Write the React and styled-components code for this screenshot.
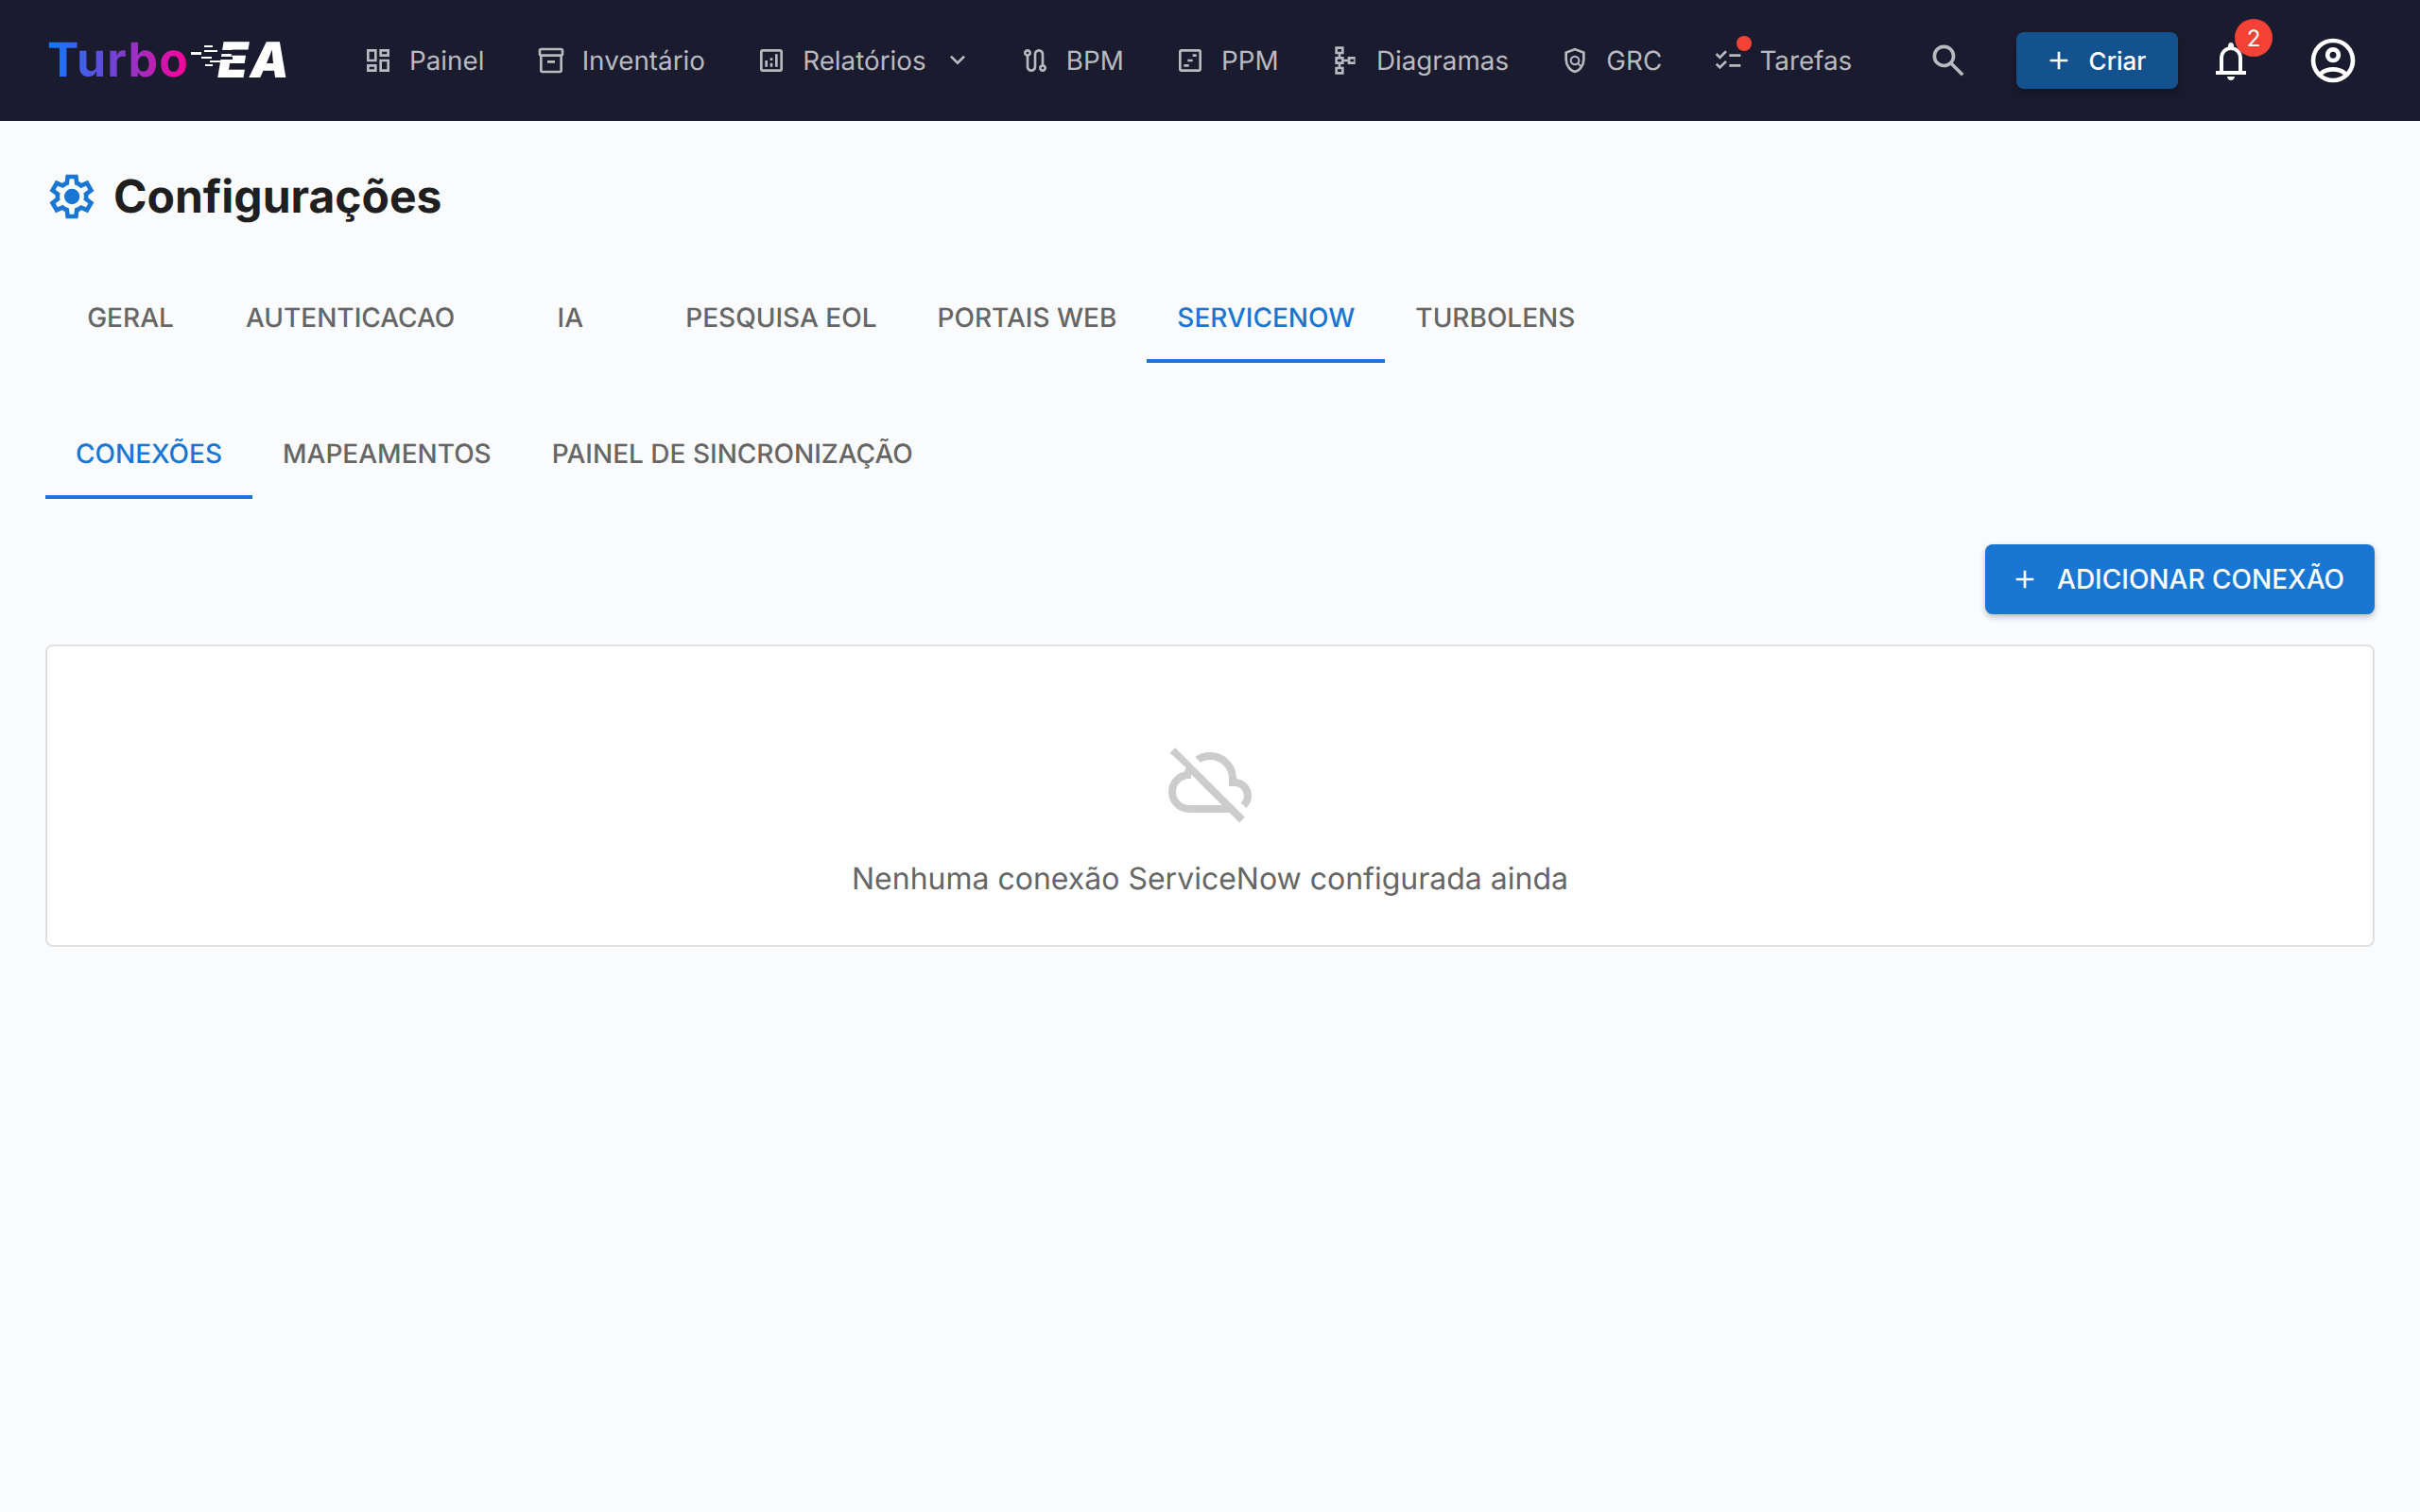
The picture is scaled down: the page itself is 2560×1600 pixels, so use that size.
import React from "react";
import styled, { createGlobalStyle } from "styled-components";

const GlobalStyle = createGlobalStyle`
  html, body {
    margin: 0;
    padding: 0;
    background: #fafbfd;
    font-family: Inter, "Liberation Sans", sans-serif;
    text-rendering: geometricPrecision;
    -webkit-font-smoothing: antialiased;
  }
  * { box-sizing: border-box; }
`;

// material symbols outlined, 960 grid
const paths = {
  dashboard:
    "M520-600v-240h320v240H520ZM120-440v-400h320v400H120Zm400 320v-400h320v400H520Zm-400 0v-240h320v240H120Zm80-400h160v-240H200v240Zm400 320h160v-240H600v240Zm0-480h160v-80H600v80ZM200-200h160v-80H200v80Z",
  inventory:
    "M200-80q-33 0-56.5-23.5T120-160v-451q-18-11-29-28.5T80-680v-120q0-33 23.5-56.5T160-880h640q33 0 56.5 23.5T880-800v120q0 23-11 40.5T840-611v451q0 33-23.5 56.5T760-80H200Zm0-520v440h560v-440H200Zm-40-80h640v-120H160v120Zm200 280h240v-80H360v80Z",
  assessment:
    "M280-280h80v-200h-80v200Zm320 0h80v-400h-80v400Zm-160 0h80v-120h-80v120Zm0-200h80v-80h-80v80ZM200-120q-33 0-56.5-23.5T120-200v-560q0-33 23.5-56.5T200-840h560q33 0 56.5 23.5T840-760v560q0 33-23.5 56.5T760-120H200Zm0-80h560v-560H200v560Z",
  route:
    "M360-120q-66 0-113-47t-47-113v-327q-35-13-57.5-43.5T120-720q0-50 35-85t85-35q50 0 85 35t35 85q0 39-22.5 69.5T280-607v327q0 33 23.5 56.5T360-200q33 0 56.5-23.5T440-280v-400q0-66 47-113t113-47q66 0 113 47t47 113v327q35 13 57.5 43.5T840-240q0 50-35 85t-85 35q-50 0-85-35t-35-85q0-39 22.5-70t57.5-43v-327q0-33-23.5-56.5T600-760q-33 0-56.5 23.5T520-680v400q0 66-47 113t-113 47ZM240-680q17 0 28.5-11.5T280-720q0-17-11.5-28.5T240-760q-17 0-28.5 11.5T200-720q0 17 11.5 28.5T240-680Zm480 480q17 0 28.5-11.5T760-240q0-17-11.5-28.5T720-280q-17 0-28.5 11.5T680-240q0 17 11.5 28.5T720-200Z",
  timeline:
    "M200-120q-33 0-56.5-23.5T120-200v-560q0-33 23.5-56.5T200-840h560q33 0 56.5 23.5T840-760v560q0 33-23.5 56.5T760-120H200Zm0-80h560v-560H200v560Zm360-400h120v-80H560v80ZM400-440h160v-80H400v80ZM280-280h160v-80H280v80Z",
  schema:
    "M160-40v-240h100v-80H160v-240h100v-80H160v-240h280v240H340v80h100v80h120v-80h240v240H560v-80H440v80H340v80h100v240H160Zm80-80h120v-80H240v80Zm0-320h120v-80H240v80Zm400 0h120v-80H640v80ZM240-760h120v-80H240v80Z",
  policy:
    "M480-80q-139-35-229.5-159.5T160-516v-244l320-120 320 120v244q0 152-90.5 276.5T480-80Zm0-84q104-33 172-132t68-220v-189l-240-90-240 90v189q0 121 68 220t172 132Zm0-156q-66 0-113-47t-47-113q0-66 47-113t113-47q66 0 113 47t47 113q0 24-7 46t-19 41l85 85-42 42-85-85q-19 12-41 19t-46 7Zm0-60q42 0 71-29t29-71q0-42-29-71t-71-29q-42 0-71 29t-29 71q0 42 29 71t71 29Z",
  checklist:
    "M222-200 80-342l56-56 85 85 170-170 56 57-225 226Zm0-320L80-662l56-56 85 85 170-170 56 57-225 226Zm298 240v-80h360v80H520Zm0-320v-80h360v80H520Z",
  search:
    "M784-120 532-372q-30 24-69 38t-83 14q-109 0-184.5-75.5T120-580q0-109 75.5-184.5T380-840q109 0 184.5 75.5T640-580q0 44-14 83t-38 69l252 252-56 56ZM380-400q75 0 127.5-52.5T560-580q0-75-52.5-127.5T380-760q-75 0-127.5 52.5T200-580q0 75 52.5 127.5T380-400Z",
  bell:
    "M160-200v-80h80v-280q0-83 50-147.5T420-792v-28q0-25 17.5-42.5T480-880q25 0 42.5 17.5T540-820v28q80 20 130 84.5T720-560v280h80v80H160Zm320 120q-33 0-56.5-23.5T400-160h160q0 33-23.5 56.5T480-80ZM320-280h320v-280q0-66-47-113t-113-47q-66 0-113 47t-47 113v280Z",
  account:
    "M234-276q51-39 114-61.5T480-360q69 0 132 22.5T726-276q35-41 54.5-93T800-480q0-133-93.5-226.5T480-800q-133 0-226.5 93.5T160-480q0 59 19.5 111t54.5 93Zm246-164q-59 0-99.5-40.5T340-580q0-59 40.5-99.5T480-720q59 0 99.5 40.5T620-580q0 59-40.5 99.5T480-440Zm0 360q-83 0-156-31.5T197-197q-54-54-85.5-127T80-480q0-83 31.5-156T197-763q54-54 127-85.5T480-880q83 0 156 31.5T763-763q54 54 85.5 127T880-480q0 83-31.5 156T763-197q-54 54-127 85.5T480-80Zm0-80q53 0 100-15.5t86-44.5q-39-29-86-44.5T480-280q-53 0-100 15.5T294-220q39 29 86 44.5T480-160Zm0-360q26 0 43-17t17-43q0-26-17-43t-43-17q-26 0-43 17t-17 43q0 26 17 43t43 17Z",
  add: "M440-440H200v-80h240v-240h80v240h240v80H520v240h-80v-240Z",
  chevron: "M480-344 240-584l56-56 184 184 184-184 56 56-240 240Z",
  settings:
    "m370-80-16-128q-13-5-24.5-12T307-235l-119 50L78-375l103-78q-1-7-1-13.5v-27q0-6.5 1-13.5L78-585l110-190 119 50q11-8 23-15t24-12l16-128h220l16 128q13 5 24.5 12t22.5 15l119-50 110 190-103 78q1 7 1 13.5v27q0 6.5-2 13.5l103 78-110 190-118-50q-11 8-23 15t-24 12L590-80H370Zm70-80h79l14-106q31-8 57.5-23.5T639-327l99 41 39-68-86-65q5-14 7-29.5t2-31.5q0-16-2-31.5t-7-29.5l86-65-39-68-99 42q-22-23-48.5-38.5T533-694l-13-106h-79l-14 106q-31 8-57.5 23.5T321-633l-99-41-39 68 86 64q-5 15-7 30t-2 32q0 16 2 31t7 30l-86 65 39 68 99-42q22 23 48.5 38.5T427-266l13 106Zm42-180q58 0 99-41t41-99q0-58-41-99t-99-41q-59 0-99.5 41T342-480q0 58 40.5 99t99.5 41Z",
  cloudOff:
    "M792-56 686-160H260q-92 0-156-64T40-380q0-77 47.5-137T210-594q3-12 7-22.5t9-21.5L56-792l56-56 736 736-56 56ZM260-240h346L284-562q-2 11-3 21t-1 21h-20q-58 0-99 41t-41 99q0 58 41 99t99 41Zm604 30-58-56q17-14 25.5-32.5T840-340q0-42-29-71t-71-29h-60v-80q0-83-58.5-141.5T480-720q-27 0-52 6.5T380-692l-58-58q35-24 74.5-37T480-800q117 0 198.5 81.5T760-520q69 8 114.5 59.5T920-340q0 39-15 72.5T864-210Z",
};

const Icon = ({ name, size = 32, className }) => (
  <svg className={className} width={size} height={size} viewBox="0 -960 960 960" fill="currentColor">
    <path d={paths[name]} />
  </svg>
);

const Page = styled.div`
  min-height: 1600px;
  background: #fafbfd;
`;

const TopBar = styled.header`
  height: 128px;
  background: #1a1b2e;
  display: flex;
  align-items: center;
  padding: 0 64px 0 48px;
`;

const Logo = styled.div`
  position: relative;
  width: 336px;
  height: 60px;
  display: flex;
  align-items: center;
  font-size: 50px;
  line-height: 60px;
  padding-left: 2px;
`;

const LogoTurbo = styled.span`
  font-weight: 700;
  letter-spacing: 1.2px;
  background: linear-gradient(90deg, #0d7bff 0%, #7a3fd0 50%, #ff0099 100%);
  -webkit-background-clip: text;
  background-clip: text;
  color: transparent;
`;

const LogoEA = styled.span`
  margin-left: 30px;
  font-size: 52px;
  font-weight: 900;
  font-style: italic;
  letter-spacing: 2px;
  color: #fff;
`;

const SpeedLines = styled.svg`
  position: absolute;
  left: 152px;
  top: 12px;
`;

const NavList = styled.nav`
  display: flex;
  align-items: center;
  gap: 54.2px;
`;

const NavItem = styled.div`
  position: relative;
  display: flex;
  align-items: center;
  gap: 17px;
  height: 60px;
  font-size: 27.8px;
  color: #b9b9c0;
  svg { flex: none; }
`;

const NavChevron = styled(Icon)`
  margin-right: -4px;
`;

const NavDot = styled.span`
  position: absolute;
  left: 25px;
  top: 4px;
  width: 16px;
  height: 16px;
  border-radius: 50%;
  background: #f44336;
`;

const Actions = styled.div`
  margin-left: auto;
  display: flex;
  align-items: center;
`;

const SearchIcon = styled(Icon)`
  color: #b9b9c0;
  margin-right: 50px;
`;

const CreateButton = styled.button`
  height: 60px;
  width: 171px;
  border: 0;
  border-radius: 8px;
  background: #14528f;
  color: #fff;
  font: 500 26px Inter, sans-serif;
  display: flex;
  align-items: center;
  justify-content: center;
  gap: 16px;
  padding: 0 5px 0 0;
  box-shadow: 0 6px 10px rgba(0, 0, 0, 0.25);
`;

const BellWrap = styled.div`
  position: relative;
  margin: 2px 0 0 32px;
  height: 48px;
  color: #fff;
`;

const Badge = styled.span`
  position: absolute;
  left: 28px;
  top: -21px;
  width: 40px;
  height: 40px;
  border-radius: 50%;
  background: #f44336;
  color: #fff;
  font-size: 24px;
  display: flex;
  align-items: center;
  justify-content: center;
`;

const ProfileIcon = styled(Icon)`
  color: #fff;
  margin-left: 56px;
`;

const Main = styled.main`
  padding: 48px;
`;

const TitleRow = styled.div`
  display: flex;
  align-items: center;
  gap: 16px;
  height: 64px;
  margin-bottom: 48px;
  color: #1976d2;
`;

const Title = styled.h1`
  margin: 0 0 2px;
  font-size: 48px;
  font-weight: 700;
  color: #1f1f1f;
`;

const TabRow = styled.div`
  display: flex;
  height: 96px;
  margin-bottom: 48px;
`;

const Tab = styled.div`
  min-width: 180px;
  padding: 4px 32px 0;
  display: flex;
  align-items: center;
  justify-content: center;
  font-size: 28px;
  font-weight: 500;
  color: ${(p) => (p.$active ? "#1976d2" : "#666")};
  border-bottom: 4px solid ${(p) => (p.$active ? "#1976d2" : "transparent")};
`;

const SubTab = styled(Tab)`
  min-width: 0;
`;

const Toolbar = styled.div`
  display: flex;
  justify-content: flex-end;
  margin-bottom: 32px;
`;

const AddButton = styled.button`
  height: 74px;
  width: 412px;
  border: 0;
  border-radius: 8px;
  background: #1976d2;
  color: #fff;
  font: 500 28px Inter, sans-serif;
  display: flex;
  align-items: center;
  justify-content: center;
  gap: 18px;
  padding: 0 6px 0 0;
  box-shadow: 0 3px 6px rgba(0, 0, 0, 0.25);
`;

const EmptyCard = styled.section`
  height: 320px;
  background: #fff;
  border: 2px solid #e0e0e0;
  border-radius: 8px;
  display: flex;
  flex-direction: column;
  align-items: center;
  padding-top: 96px;
`;

const EmptyIcon = styled(Icon)`
  color: #ccc;
`;

const EmptyText = styled.p`
  margin: 30px 0 0;
  font-size: 32px;
  line-height: 48px;
  color: #666;
`;

const navItems = [
  { label: "Painel", icon: "dashboard" },
  { label: "Inventário", icon: "inventory" },
  { label: "Relatórios", icon: "assessment", menu: true },
  { label: "BPM", icon: "route" },
  { label: "PPM", icon: "timeline" },
  { label: "Diagramas", icon: "schema" },
  { label: "GRC", icon: "policy" },
  { label: "Tarefas", icon: "checklist", dot: true },
];

const tabs = ["GERAL", "AUTENTICACAO", "IA", "PESQUISA EOL", "PORTAIS WEB", "SERVICENOW", "TURBOLENS"];
const subTabs = ["CONEXÕES", "MAPEAMENTOS", "PAINEL DE SINCRONIZAÇÃO"];

export default function App() {
  return (
    <Page>
      <GlobalStyle />
      <TopBar>
        <Logo>
          <LogoTurbo>Turbo</LogoTurbo>
          <LogoEA>EA</LogoEA>
          <SpeedLines width="90" height="36" viewBox="0 0 90 36">
            <rect x="30" y="7" width="18" height="4" fill="#1a1b2e" />
            <rect x="28" y="14" width="18" height="3" fill="#1a1b2e" />
            <g fill="#fff">
              <rect x="2" y="9" width="11" height="3" />
              <rect x="16" y="2" width="9" height="2" />
              <rect x="16" y="7" width="14" height="2" />
              <rect x="13" y="14" width="11" height="2" />
              <rect x="22" y="18" width="12" height="2" />
              <rect x="17" y="22" width="8" height="2" />
            </g>
          </SpeedLines>
        </Logo>
        <NavList>
          {navItems.map(({ label, icon, menu, dot }) => (
            <NavItem key={label}>
              <Icon name={icon} size={32} />
              {label}
              {menu && <NavChevron name="chevron" size={32} />}
              {dot && <NavDot />}
            </NavItem>
          ))}
        </NavList>
        <Actions>
          <SearchIcon name="search" size={44} />
          <CreateButton>
            <Icon name="add" size={32} />
            Criar
          </CreateButton>
          <BellWrap>
            <Icon name="bell" size={48} />
            <Badge>2</Badge>
          </BellWrap>
          <ProfileIcon name="account" size={56} />
        </Actions>
      </TopBar>
      <Main>
        <TitleRow>
          <Icon name="settings" size={56} />
          <Title>Configurações</Title>
        </TitleRow>
        <TabRow>
          {tabs.map((t) => (
            <Tab key={t} $active={t === "SERVICENOW"}>{t}</Tab>
          ))}
        </TabRow>
        <TabRow>
          {subTabs.map((t) => (
            <SubTab key={t} $active={t === "CONEXÕES"}>{t}</SubTab>
          ))}
        </TabRow>
        <Toolbar>
          <AddButton>
            <Icon name="add" size={32} />
            ADICIONAR CONEXÃO
          </AddButton>
        </Toolbar>
        <EmptyCard>
          <EmptyIcon name="cloudOff" size={96} />
          <EmptyText>Nenhuma conexão ServiceNow configurada ainda</EmptyText>
        </EmptyCard>
      </Main>
    </Page>
  );
}
